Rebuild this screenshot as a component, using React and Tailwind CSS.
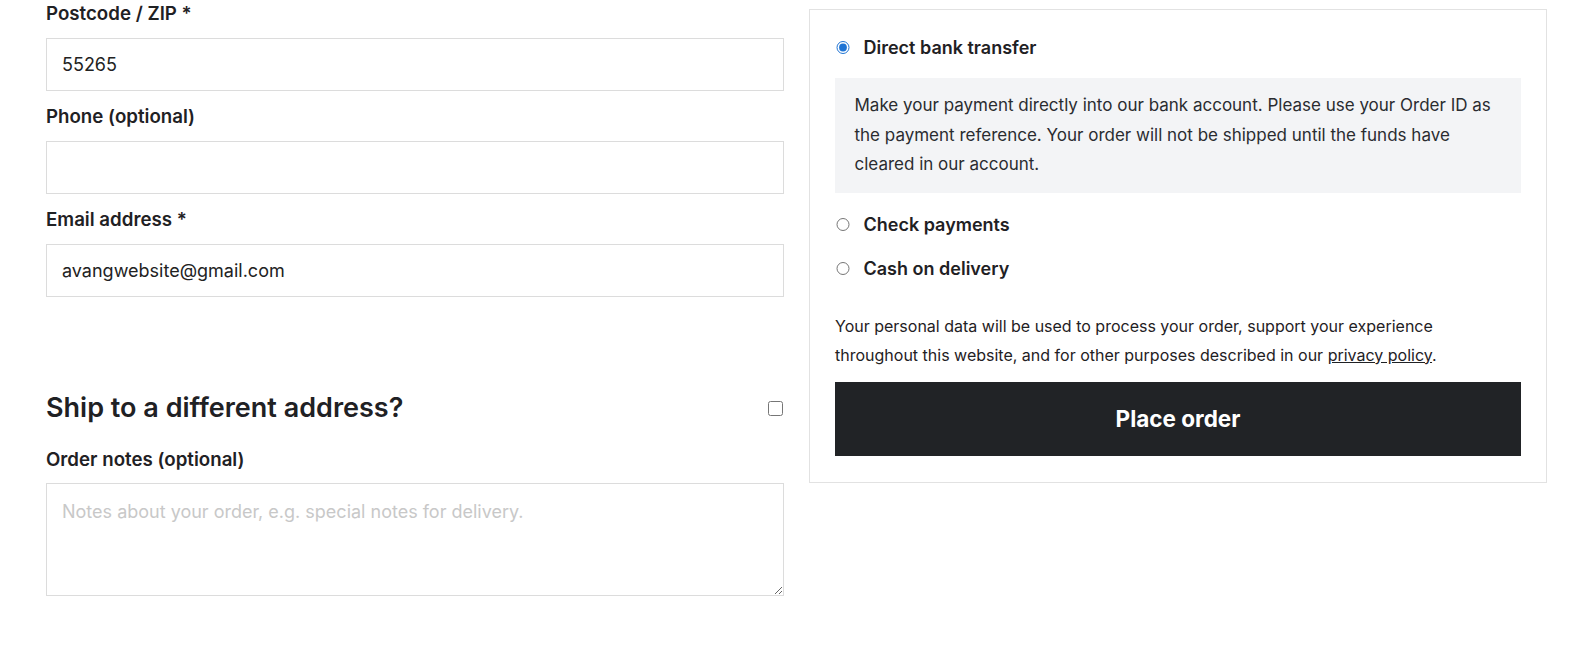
import { useState } from 'react'

const font = { fontFamily: 'Inter, "Noto Sans", sans-serif' }

function Field({ label, value, type = 'text' }) {
  return (
    <div className="mb-[12.5px]">
      <label className="block text-[18.7px] font-semibold leading-[28px] text-[#1f2124] mb-[9.5px]">{label}</label>
      <input
        type={type}
        defaultValue={value}
        className="block w-full h-[53px] border border-[#dcdcdc] bg-white px-[15px] text-[18px] text-[#222] outline-none"
      />
    </div>
  )
}

function Method({ id, label, checked, onPick }) {
  return (
    <label className="flex items-center h-[28px] cursor-pointer">
      <input
        type="radio"
        name="payment"
        checked={checked}
        onChange={() => onPick(id)}
        className="m-0 ml-[1px] w-[13.5px] h-[13.5px] accent-[#1f74d4]"
      />
      <span className="ml-[14px] text-[18px] font-semibold text-[#1f2124]">{label}</span>
    </label>
  )
}

export default function App() {
  const [method, setMethod] = useState('bacs')

  return (
    <div className="w-[1591px] h-[650px] bg-white overflow-hidden" style={font}>
      <div className="flex items-start pl-[46px] gap-[25px]">
        <div className="w-[738px]">
          <Field label="Postcode / ZIP *" value="55265" />
          <Field label="Phone (optional)" value="" type="tel" />
          <Field label="Email address *" value="avangwebsite@gmail.com" type="email" />

          <div className="flex items-center justify-between mt-[93.5px]">
            <h3 className="text-[27px] font-semibold leading-[36px] text-[#1f2124]">Ship to a different address?</h3>
            <input type="checkbox" className="w-[15px] h-[15px] m-0 mr-[1px]" />
          </div>

          <label className="block mt-[20px] text-[18.7px] font-semibold leading-[28px] text-[#1f2124] mb-[9px]">Order notes (optional)</label>
          <textarea
            placeholder="Notes about your order, e.g. special notes for delivery."
            className="block w-full h-[113px] border border-[#dcdcdc] px-[15px] py-[14px] text-[18px] text-[#222] placeholder:text-[#c8c8c8] outline-none"
          />
        </div>

        <div className="w-[738px] mt-[9px] border border-[#e2e2e2] px-[25px] pt-[23.7px] pb-[25.5px]">
          <Method id="bacs" label="Direct bank transfer" checked={method === 'bacs'} onPick={setMethod} />
          {method === 'bacs' && (
            <div className="mt-[16px] mb-[17.5px] bg-[#f3f4f6] pl-[19.5px] pr-[20px] py-[13.5px] text-[17px] leading-[29.4px] text-[#2a2c30]">
              Make your payment directly into our bank account. Please use your Order ID as the payment reference. Your order will not be shipped until the funds have cleared in our account.
            </div>
          )}
          <Method id="cheque" label="Check payments" checked={method === 'cheque'} onPick={setMethod} />
          <div className="h-[16px]" />
          <Method id="cod" label="Cash on delivery" checked={method === 'cod'} onPick={setMethod} />

          <p className="mt-[30px] pr-[50px] text-[16px] leading-[28.4px] text-[#1f2124]">
            Your personal data will be used to process your order, support your experience throughout this website, and for other purposes described in our{' '}
            <a href="#" className="underline">privacy policy</a>.
          </p>

          <button className="mt-[13px] w-full h-[74px] bg-[#212326] text-white text-[22.5px] font-bold">
            Place order
          </button>
        </div>
      </div>
    </div>
  )
}
